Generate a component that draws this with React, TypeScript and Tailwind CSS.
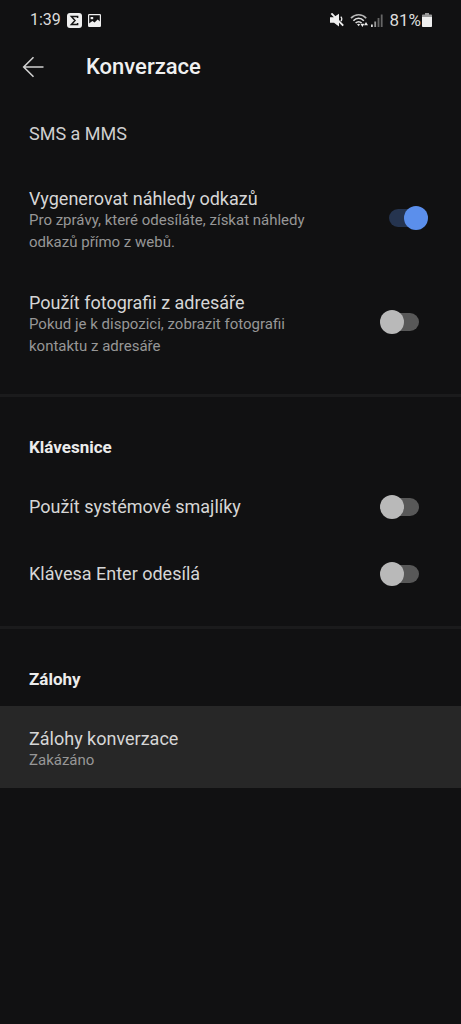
import { useId, useState } from "react";

function StatusBar() {
  return (
    <div className="flex h-10 items-center justify-between pl-[30px] pr-[29px] text-[#dcdcdc]">
      <div className="flex items-center gap-1.5">
        <span className="text-base leading-5">1:39</span>
        <svg width="15" height="15" viewBox="0 0 15 15" aria-hidden="true">
          <rect width="15" height="15" rx="3" fill="#efefef" />
          <path d="M10.6 5V3.5H4.4L8 7.5 4.4 11.5h6.2V10" fill="none" stroke="#151515" strokeWidth="1.5" />
        </svg>
        <svg width="13" height="13" viewBox="0 0 13 13" aria-hidden="true">
          <rect x="0.6" y="0.6" width="11.8" height="11.8" rx="0.6" fill="none" stroke="#efefef" strokeWidth="1.2" />
          <path d="M1 9.6 4.4 7l2.2 1.4L9.6 5.6 12 7.6V12H1z" fill="#efefef" />
          <path d="M2.6 3h2.6v2.2H2.6z" fill="#efefef" />
        </svg>
      </div>
      <div className="flex items-center gap-1.5">
        <svg width="14" height="14" viewBox="0 0 14 14" aria-hidden="true">
          <path d="M0 4.2h3.6L9 .8v12.6L4 9.8H0z" fill="#efefef" />
          <path d="M10.8 3.6c1.3 1.4 1.3 3 .2 4.6" fill="none" stroke="#efefef" strokeWidth="1.2" />
          <path d="M1.4.4 13.2 12.6" stroke="#efefef" strokeWidth="1.9" />
        </svg>
        <div className="flex items-center gap-0.5">
          <svg width="19" height="15" viewBox="0 0 19 15" fill="none" aria-hidden="true">
            <path d="M1 5.2C5.3.6 12 .6 16.2 5.2" stroke="#b5b5b5" strokeWidth="1.7" />
            <path d="M3.4 7.7c3-3.2 7.4-3.2 10.4 0" stroke="#dedede" strokeWidth="1.6" />
            <path d="M5.6 10c1.8-1.8 4.3-1.8 6 0" stroke="#dedede" strokeWidth="1.5" />
            <path d="M7 11.3c1-.9 2.3-.9 3.2 0l-1.6 2z" fill="#dedede" />
            <path d="M10.4 10.8h4l-2 3.2zM14 12.2h4L16 9z" fill="#efefef" />
          </svg>
          <svg width="12" height="13" viewBox="0 0 12 13" aria-hidden="true">
            <path d="M0 10.5h1.8V13H0z" fill="#dedede" />
            <path d="M3.3 7.5h1.8V13H3.3z" fill="#999" />
            <path d="M6.6 4h1.8v9H6.6zM9.8.5h1.8V13H9.8z" fill="#666" />
          </svg>
        </div>
        <div className="flex items-center gap-px">
          <span className="text-[17px] leading-5">81%</span>
          <svg width="10" height="14" viewBox="0 0 10 14" aria-hidden="true">
            <path d="M3 0h4v1.5h2.2a.8.8 0 0 1 .8.8V4H0V2.3a.8.8 0 0 1 .8-.8H3z" fill="#999" />
            <path d="M0 4h10v9.2a.8.8 0 0 1-.8.8H.8a.8.8 0 0 1-.8-.8z" fill="#efefef" />
          </svg>
        </div>
      </div>
    </div>
  );
}

function SwitchRow({ title, detail, initial = false }: { title: string; detail?: string; initial?: boolean }) {
  const id = useId();
  const [on, setOn] = useState(initial);
  return (
    <div className={`flex items-center justify-between gap-6 pl-[29px] pr-[33px] ${detail ? "py-[19px]" : "py-[21px]"}`}>
      <label htmlFor={id} className="max-w-[290px]">
        <span className="block text-lg leading-6 text-[#d6d6d6]">{title}</span>
        {detail && <span className="-mt-0.5 block text-[15px] leading-[22px] text-[#979797]">{detail}</span>}
      </label>
      <input
        id={id}
        type="checkbox"
        role="switch"
        checked={on}
        onChange={(e) => setOn(e.target.checked)}
        className={`relative h-6 w-12 shrink-0 cursor-pointer appearance-none before:absolute before:inset-x-[9px] before:inset-y-[3px] before:rounded-full before:bg-[#585858] after:absolute after:left-0 after:top-0 after:size-6 after:rounded-full after:bg-[#b9b9b9] checked:before:bg-[#25344f] checked:after:left-6 checked:after:bg-[#5b8fec] ${detail ? "mb-1" : ""}`}
      />
    </div>
  );
}

function SectionTitle({ children }: { children: string }) {
  return <h2 className="px-[29px] pb-[13px] pt-9 text-[17px] font-bold leading-7 text-[#ececec]">{children}</h2>;
}

export default function App() {
  return (
    <div className="min-h-screen bg-[#111112] font-['Roboto',sans-serif]">
      <StatusBar />
      <header className="flex h-[54px] items-center gap-[42px] pl-[22px]">
        <button type="button" aria-label="Zpět" className="cursor-pointer">
          <svg width="22" height="22" viewBox="0 0 22 22" fill="none" stroke="#d0d0d0" strokeWidth="1.6" aria-hidden="true">
            <path d="M21.5 11H1.8M11.5 1.2 1.7 11l9.8 9.8" />
          </svg>
        </button>
        <h1 className="text-[22px] font-medium leading-7 text-[#f0f0f0]">Konverzace</h1>
      </header>
      <main>
        <section className="border-b-[3px] border-[#1b1b1c] pb-[18px]">
          <h2 className="px-[29px] pb-5 pt-[26px] text-lg leading-7 text-[#cfcfcf]">SMS a MMS</h2>
          <SwitchRow
            title="Vygenerovat náhledy odkazů"
            detail="Pro zprávy, které odesíláte, získat náhledy odkazů přímo z webů."
            initial
          />
          <SwitchRow title="Použít fotografii z adresáře" detail="Pokud je k dispozici, zobrazit fotografii kontaktu z adresáře" />
        </section>
        <section className="border-b-[3px] border-[#1b1b1c] pb-[19px]">
          <SectionTitle>Klávesnice</SectionTitle>
          <div className="flex flex-col gap-px">
            <SwitchRow title="Použít systémové smajlíky" />
            <SwitchRow title="Klávesa Enter odesílá" />
          </div>
        </section>
        <section>
          <SectionTitle>Zálohy</SectionTitle>
          <button type="button" className="block w-full cursor-pointer bg-[#272727] pb-[17px] pl-[29px] pr-[33px] pt-[21px] text-left">
            <span className="block text-lg leading-6 text-[#d6d6d6]">Zálohy konverzace</span>
            <span className="-mt-0.5 block text-[15px] leading-[22px] text-[#979797]">Zakázáno</span>
          </button>
        </section>
      </main>
    </div>
  );
}
